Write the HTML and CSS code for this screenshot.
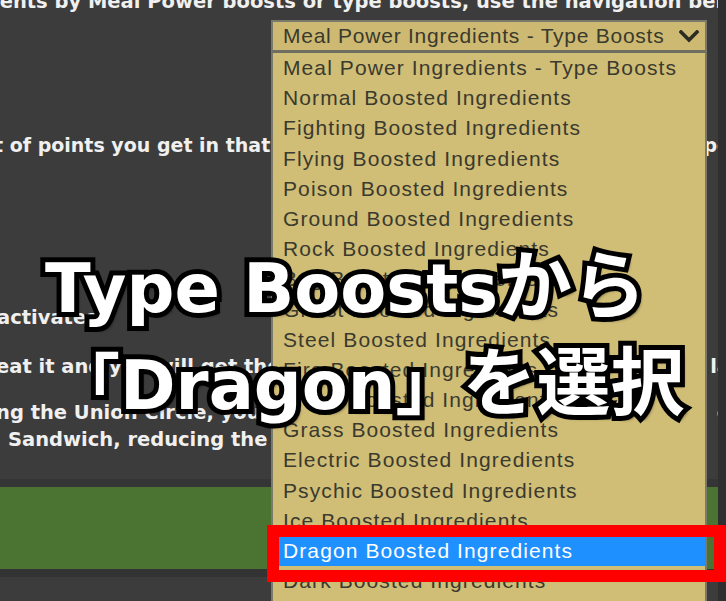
FILE: index.html
```html
<!DOCTYPE html>
<html lang="ja">
<head>
<meta charset="utf-8">
<title>Type Boosts</title>
<link rel="stylesheet" href="styles.css">
</head>
<body>
<div class="page">
  <p class="line top">ients by Meal Power boosts or type boosts, use the navigation below to find the one</p>
  <p class="line l1"><span>t of points you get in that type. A Sandwich's Meal Power type</span><span class="frag">pe</span></p>
  <p class="line l2">activates</p>
  <p class="line l3"><span>eat it and you will get the Power</span><span class="frag">la</span></p>
  <p class="line l4"><span>ng the Union Circle, you can share a</span><span class="frag">e</span></p>
  <p class="line l5">Sandwich, reducing the effort needed to make it again.</p>
  <div class="green"></div>
</div>

<div class="dropdown">
  <div class="select">
    <span class="sel-text">Meal Power Ingredients - Type Boosts</span>
    <svg class="chev" width="20" height="13" viewBox="0 0 20 13"><polyline points="2,2 10,10 18,2" fill="none" stroke="#2c2c24" stroke-width="3.6" stroke-linecap="square"/></svg>
  </div>
  <ul class="list">
    <li>Meal Power Ingredients - Type Boosts</li>
    <li>Normal Boosted Ingredients</li>
    <li>Fighting Boosted Ingredients</li>
    <li>Flying Boosted Ingredients</li>
    <li>Poison Boosted Ingredients</li>
    <li>Ground Boosted Ingredients</li>
    <li>Rock Boosted Ingredients</li>
    <li>Bug Boosted Ingredients</li>
    <li>Ghost Boosted Ingredients</li>
    <li>Steel Boosted Ingredients</li>
    <li>Fire Boosted Ingredients</li>
    <li>Water Boosted Ingredients</li>
    <li>Grass Boosted Ingredients</li>
    <li>Electric Boosted Ingredients</li>
    <li>Psychic Boosted Ingredients</li>
    <li>Ice Boosted Ingredients</li>
    <li class="active">Dragon Boosted Ingredients</li>
    <li>Dark Boosted Ingredients</li>
    <li>Fairy Boosted Ingredients</li>
  </ul>
</div>

<div class="caption">
  <div class="cap-line c1">Type Boosts<span class="kana">から</span></div>
  <div class="cap-line c2"><span class="br">「</span>Dragon<span class="br">」</span><span class="kana">を選択</span></div>
</div>

<div class="highlight-box"></div>
</body>
</html>
```

FILE: styles.css
```css
* { box-sizing: border-box; }

html, body {
  margin: 0;
  padding: 0;
}

body {
  width: 726px;
  height: 601px;
  overflow: hidden;
  position: relative;
  background: #2f2f2f;
}

.page {
  width: 718px;
  height: 601px;
  overflow: hidden;
  background: #3c3c3c;
  color: #f0f0f0;
  font-family: "DejaVu Sans", Verdana, sans-serif;
  font-weight: bold;
  font-size: 19.5px;
  line-height: 27px;
}

.line {
  margin: 0;
  white-space: nowrap;
  display: flex;
  justify-content: space-between;
}

.frag { margin-right: -12px; }

.top { margin-top: -12px; margin-left: -7px; }
.l1 { margin-top: 117px; margin-left: -6px; font-size: 19px; }
.l2 { margin-top: 145px; margin-left: -3px; }
.l3 { margin-top: 22px; margin-left: -4px; }
.l4 { margin-top: 19px; margin-left: -4px; }
.l5 { margin-left: 8px; }

.green {
  margin-top: 26px;
  height: 98px;
  background: #4b7433;
  border-top: 8px solid #353535;
  border-bottom: 8px solid #333333;
}

/* dropdown (open menu) */
.dropdown {
  position: absolute;
  left: 271px;
  top: 20px;
  width: 436px;
  font-family: "Liberation Sans", Arial, sans-serif;
  font-size: 21px;
  letter-spacing: 1.1px;
  color: #3a3a2e;
}

.select {
  height: 33px;
  background: #cdb971;
  border: 2px solid #7a7a6c;
  border-bottom: 3px solid #6e6e62;
  padding: 0 4px 0 10px;
  display: flex;
  align-items: center;
  justify-content: space-between;
  white-space: nowrap;
  letter-spacing: 0.75px;
}

.sel-text { flex: none; }
.chev { flex: none; margin-right: 2px; }

.list {
  list-style: none;
  margin: 0;
  padding: 0;
  background: #d0bd76;
  border-left: 2px solid #7a7a6c;
  border-right: 2px solid #7a7a6c;
}

.list li {
  height: 30.2px;
  line-height: 30.2px;
  padding-left: 10px;
  white-space: nowrap;
}

.list li.active {
  background: #1e90ff;
  color: #ffffff;
}

/* overlay caption */
.caption {
  position: absolute;
  left: 0;
  top: 0;
  font-family: "DejaVu Sans", "Noto Sans CJK JP", sans-serif;
  font-weight: 700;
  font-size: 67px;
  color: #ffffff;
  -webkit-text-stroke: 10px #000;
  paint-order: stroke fill;
  text-shadow: 4px 4px 3px rgba(0,0,0,0.45);
  white-space: nowrap;
}

.kana {
  font-family: "Noto Sans CJK JP", sans-serif;
  font-size: 74px;
  line-height: 0;
}

.br {
  font-family: "Noto Sans CJK JP", sans-serif;
  line-height: 0;
}

.cap-line { position: absolute; line-height: 67px; }
.c1 { left: 45px; top: 256px; }
.c2 { left: 53px; top: 353px; }

.highlight-box {
  position: absolute;
  left: 267px;
  top: 525px;
  width: 459px;
  height: 57px;
  border: 12px solid #ff0000;
}
```
